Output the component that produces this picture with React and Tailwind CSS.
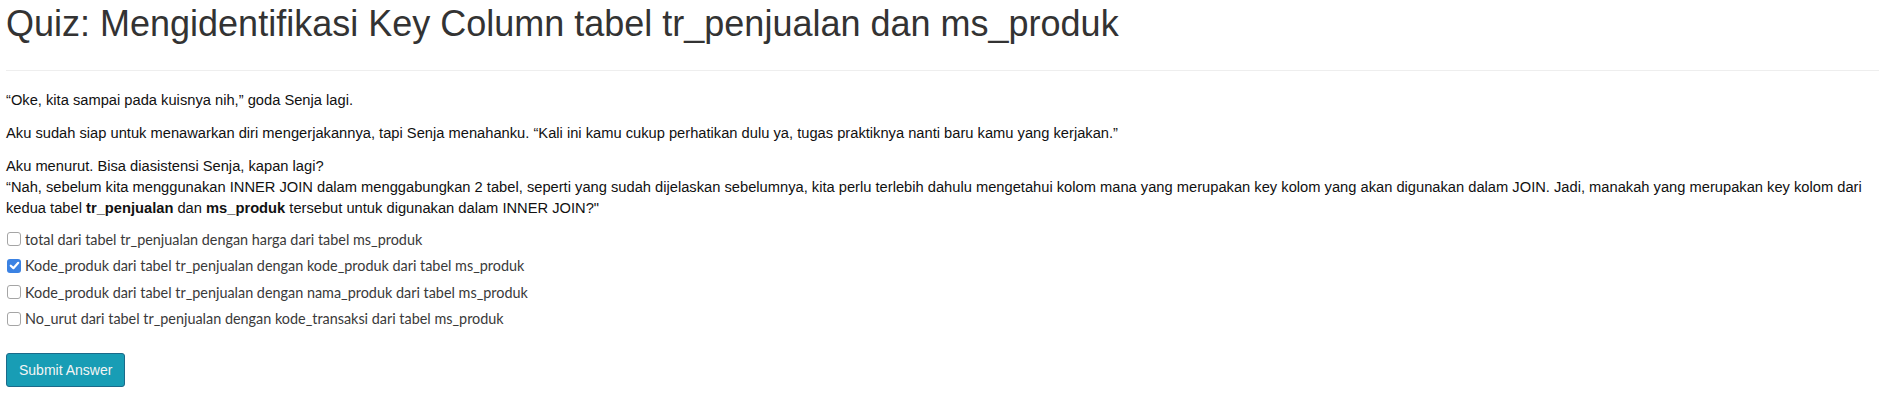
import React, { useState } from 'react';

const options = [
  'total dari tabel tr_penjualan dengan harga dari tabel ms_produk',
  'Kode_produk dari tabel tr_penjualan dengan kode_produk dari tabel ms_produk',
  'Kode_produk dari tabel tr_penjualan dengan nama_produk dari tabel ms_produk',
  'No_urut dari tabel tr_penjualan dengan kode_transaksi dari tabel ms_produk',
];

const Box = ({ checked }) =>
  checked ? (
    <span className="w-[14px] h-[14px] rounded-[3px] bg-[#3b82e3] flex items-center justify-center shrink-0">
      <svg width="11" height="11" viewBox="0 0 10 10">
        <path d="M1.6 5.2 L4 7.4 L8.4 2.6" fill="none" stroke="#fff" strokeWidth="2" strokeLinecap="round" strokeLinejoin="round" />
      </svg>
    </span>
  ) : (
    <span className="w-[14px] h-[14px] rounded-[3px] border border-[#a5a5a5] bg-white shrink-0"></span>
  );

export default function App() {
  const [selected, setSelected] = useState([1]);

  const toggle = (i) => {
    setSelected(selected.includes(i) ? selected.filter((s) => s !== i) : [...selected, i]);
  };

  return (
    <div className="bg-white min-h-[400px] px-[6px] pt-1 font-['Liberation_Sans',Arial,sans-serif] text-[14.7px] leading-[21px] text-[#111]">
      <h1 className="text-[36px] leading-[40px] text-[#333]">
        Quiz: Mengidentifikasi Key Column tabel tr_penjualan dan ms_produk
      </h1>
      <hr className="mt-[26px] border-0 border-t border-[#eee]" />

      {/* story text */}
      <p className="mt-[19px] mb-3">“Oke, kita sampai pada kuisnya nih,” goda Senja lagi.</p>
      <p className="mb-3">
        Aku sudah siap untuk menawarkan diri mengerjakannya, tapi Senja menahanku. “Kali ini kamu cukup perhatikan dulu ya, tugas praktiknya nanti baru kamu yang kerjakan.”
      </p>
      <div>
        <p>Aku menurut. Bisa diasistensi Senja, kapan lagi?</p>
        <p>
          “Nah, sebelum kita menggunakan INNER JOIN dalam menggabungkan 2 tabel, seperti yang sudah dijelaskan sebelumnya, kita perlu terlebih dahulu mengetahui kolom mana yang merupakan key kolom yang akan digunakan dalam JOIN. Jadi, manakah yang merupakan key kolom dari kedua tabel <b>tr_penjualan</b> dan <b>ms_produk</b> tersebut untuk digunakan dalam INNER JOIN?"
        </p>
      </div>

      {/* options */}
      <div className="mt-[7px] flex flex-col font-['Lato',sans-serif] text-[14.4px] text-[#3a3a3a]">
        {options.map((opt, i) => (
          <label key={i} onClick={() => toggle(i)} className="h-[26.5px] flex items-center gap-[4px] pl-[1px] cursor-pointer">
            <Box checked={selected.includes(i)} />
            <span>{opt}</span>
          </label>
        ))}
      </div>

      <button className="mt-[21px] px-3 py-1.5 bg-[#189db5] border border-[#1b6a8a] rounded-[3px] text-[#f4f4f4] text-[14px] leading-[20px]">
        Submit Answer
      </button>
    </div>
  );
}
